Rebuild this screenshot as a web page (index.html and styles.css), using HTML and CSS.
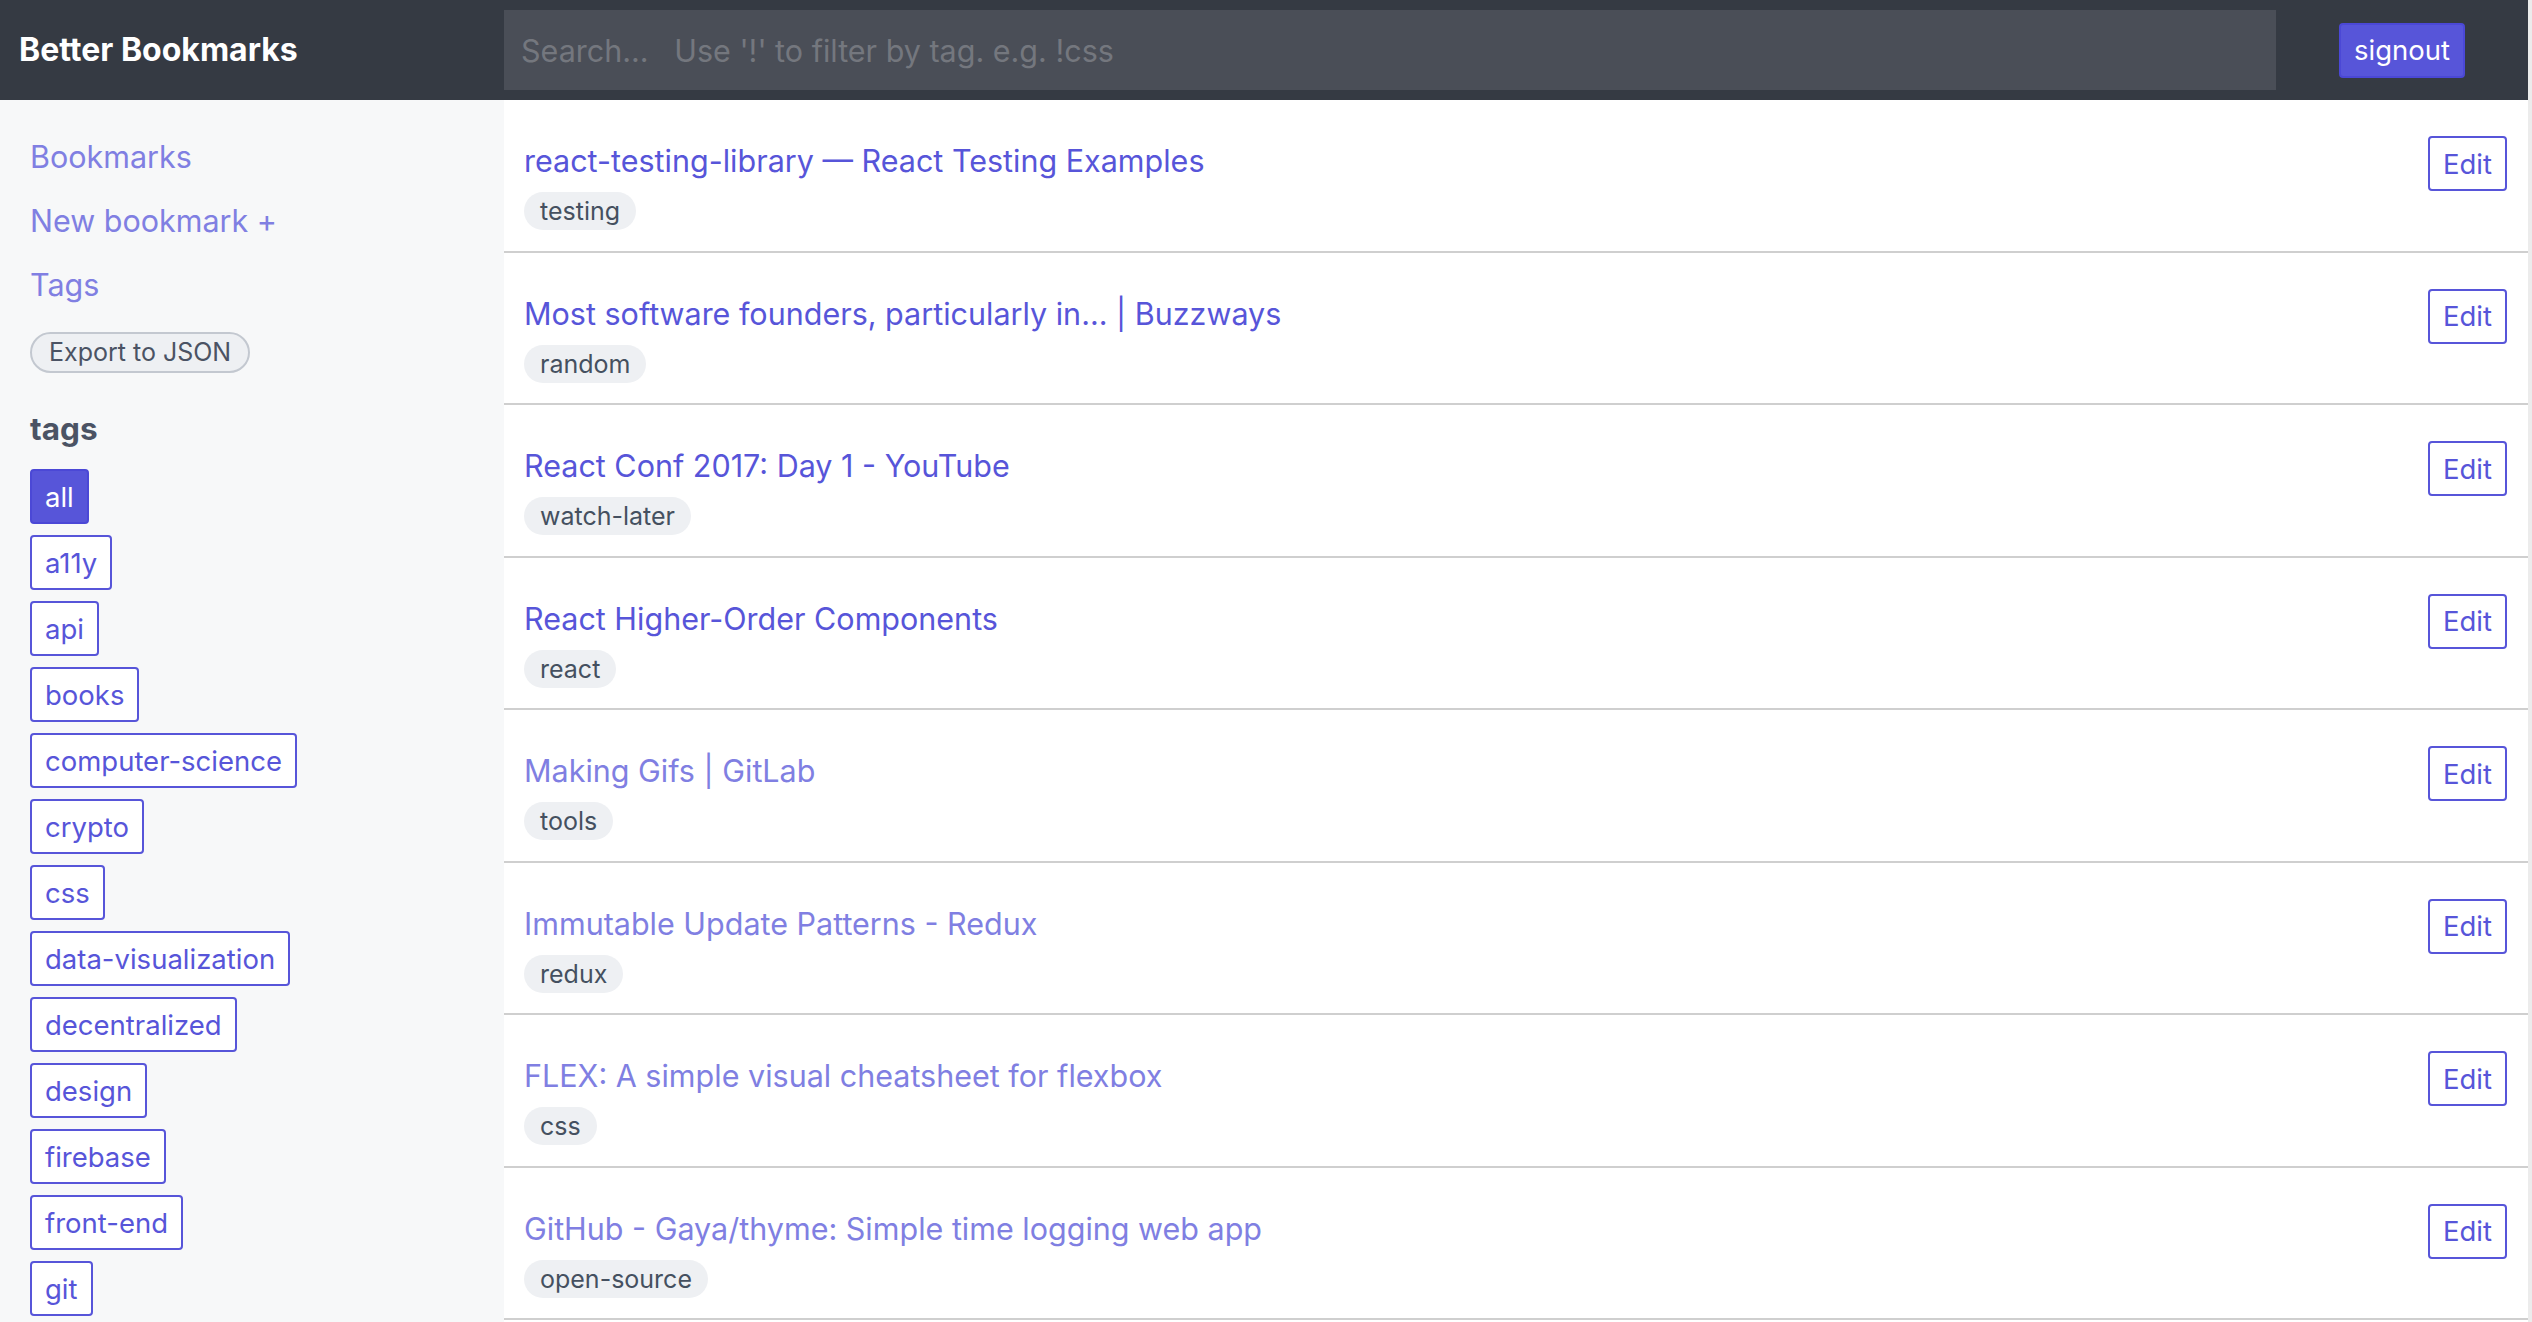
FILE: index.html
```html
<!DOCTYPE html>
<html lang="en">
<head>
<meta charset="utf-8">
<title>Better Bookmarks</title>
<link rel="stylesheet" href="styles.css">
</head>
<body>
<div class="app">
  <header class="topbar">
    <div class="brand">Better Bookmarks</div>
    <input class="search" type="text" placeholder="Search...   Use '!' to filter by tag. e.g. !css">
    <div class="actions"><button class="btn btn-primary">signout</button></div>
  </header>
  <div class="layout">
    <aside class="sidebar">
      <nav class="nav">
        <a class="nav-link" href="#">Bookmarks</a>
        <a class="nav-link" href="#">New bookmark +</a>
        <a class="nav-link" href="#">Tags</a>
      </nav>
      <button class="chip-btn">Export to JSON</button>
      <h2 class="tags-title">tags</h2>
      <div class="tag-list">
        <button class="btn btn-primary">all</button>
        <button class="btn">a11y</button>
        <button class="btn">api</button>
        <button class="btn">books</button>
        <button class="btn">computer-science</button>
        <button class="btn">crypto</button>
        <button class="btn">css</button>
        <button class="btn">data-visualization</button>
        <button class="btn">decentralized</button>
        <button class="btn">design</button>
        <button class="btn">firebase</button>
        <button class="btn">front-end</button>
        <button class="btn">git</button>
      </div>
    </aside>
    <main class="list">
      <div class="row">
        <div class="row-body">
          <a class="title" href="#">react-testing-library — React Testing Examples</a>
          <span class="label">testing</span>
        </div>
        <button class="btn edit">Edit</button>
      </div>
      <div class="row">
        <div class="row-body">
          <a class="title" href="#">Most software founders, particularly in... | Buzzways</a>
          <span class="label">random</span>
        </div>
        <button class="btn edit">Edit</button>
      </div>
      <div class="row">
        <div class="row-body">
          <a class="title" href="#">React Conf 2017: Day 1 - YouTube</a>
          <span class="label">watch-later</span>
        </div>
        <button class="btn edit">Edit</button>
      </div>
      <div class="row">
        <div class="row-body">
          <a class="title" href="#">React Higher-Order Components</a>
          <span class="label">react</span>
        </div>
        <button class="btn edit">Edit</button>
      </div>
      <div class="row">
        <div class="row-body">
          <a class="title visited" href="#">Making Gifs | GitLab</a>
          <span class="label">tools</span>
        </div>
        <button class="btn edit">Edit</button>
      </div>
      <div class="row">
        <div class="row-body">
          <a class="title visited" href="#">Immutable Update Patterns - Redux</a>
          <span class="label">redux</span>
        </div>
        <button class="btn edit">Edit</button>
      </div>
      <div class="row">
        <div class="row-body">
          <a class="title visited" href="#">FLEX: A simple visual cheatsheet for flexbox</a>
          <span class="label">css</span>
        </div>
        <button class="btn edit">Edit</button>
      </div>
      <div class="row">
        <div class="row-body">
          <a class="title visited" href="#">GitHub - Gaya/thyme: Simple time logging web app</a>
          <span class="label">open-source</span>
        </div>
        <button class="btn edit">Edit</button>
      </div>
    </main>
  </div>
</div>
</body>
</html>
```

FILE: styles.css
```css
* { box-sizing: border-box; }

html {
  background: #ececec;
  height: 100%;
  overflow: hidden;
}

body {
  margin: 0;
  font-family: Inter, "Noto Sans", sans-serif;
  font-size: 30.5px;
  line-height: 48px;
  color: #4b5364;
  overflow: hidden;
  height: 100%;
}

.app {
  width: calc(100% - 4px);
  height: 100%;
  background: #ffffff;
  display: flex;
  flex-direction: column;
}

.topbar {
  flex: 0 0 100px;
  height: 100px;
  background: #353a43;
  display: grid;
  grid-template-columns: 504px 1fr 252px;
  align-items: center;
}

.brand {
  padding-left: 19px;
  color: #ffffff;
  font-weight: 700;
  font-size: 32px;
}

.search {
  height: 80px;
  width: 100%;
  border: 0;
  outline: 0;
  background: #4a4e57;
  color: #ffffff;
  font-family: inherit;
  font-size: 30.5px;
  padding: 0 17px;
}

.search::placeholder {
  color: #74777e;
  opacity: 1;
}

.actions {
  display: flex;
  justify-content: center;
}

.btn {
  font-family: inherit;
  font-size: 27.5px;
  line-height: 34px;
  height: 55px;
  padding: 0 13px;
  border: 2px solid #5755d9;
  border-radius: 4px;
  background: #ffffff;
  color: #5755d9;
  cursor: pointer;
  white-space: nowrap;
}

.btn-primary {
  background: #5755d9;
  color: #ffffff;
  border-color: #4b48d6;
}

.layout {
  flex: 1;
  display: flex;
  min-height: 0;
}

.sidebar {
  flex: 0 0 504px;
  background: #f7f8f9;
  padding: 33px 30px 0 30px;
  display: flex;
  flex-direction: column;
  align-items: flex-start;
}

.nav {
  display: flex;
  flex-direction: column;
  gap: 16px;
}

.nav-link {
  color: #807fe2;
  text-decoration: none;
}

.chip-btn {
  margin-top: 23px;
  height: 41px;
  padding: 0 17px;
  border: 2px solid #c3c8d0;
  border-radius: 22px;
  background: #eef0f3;
  color: #4b5364;
  font-family: inherit;
  font-size: 25px;
  line-height: 35px;
}

.tags-title {
  margin: 32px 0 16px 0;
  font-size: 31.5px;
  line-height: 48px;
  font-weight: 700;
  color: #4b5364;
}

.tag-list {
  display: flex;
  flex-direction: column;
  align-items: flex-start;
  gap: 11px;
}

.list {
  flex: 1;
  min-width: 0;
  background: #ffffff;
}

.row {
  display: flex;
  justify-content: space-between;
  align-items: flex-start;
  padding: 37px 21px 20.5px 20px;
  border-bottom: 2px solid #cfcfcf;
}

.row .edit {
  margin-top: -1px;
}

.row-body {
  display: flex;
  flex-direction: column;
  align-items: flex-start;
  gap: 7px;
}

.title {
  color: #5755d9;
  text-decoration: none;
}

.title.visited {
  color: #807fe2;
}

.label {
  display: inline-block;
  background: #eef0f3;
  color: #455060;
  font-size: 25px;
  line-height: 38px;
  height: 38px;
  padding: 0 16px;
  border-radius: 19px;
}
```
